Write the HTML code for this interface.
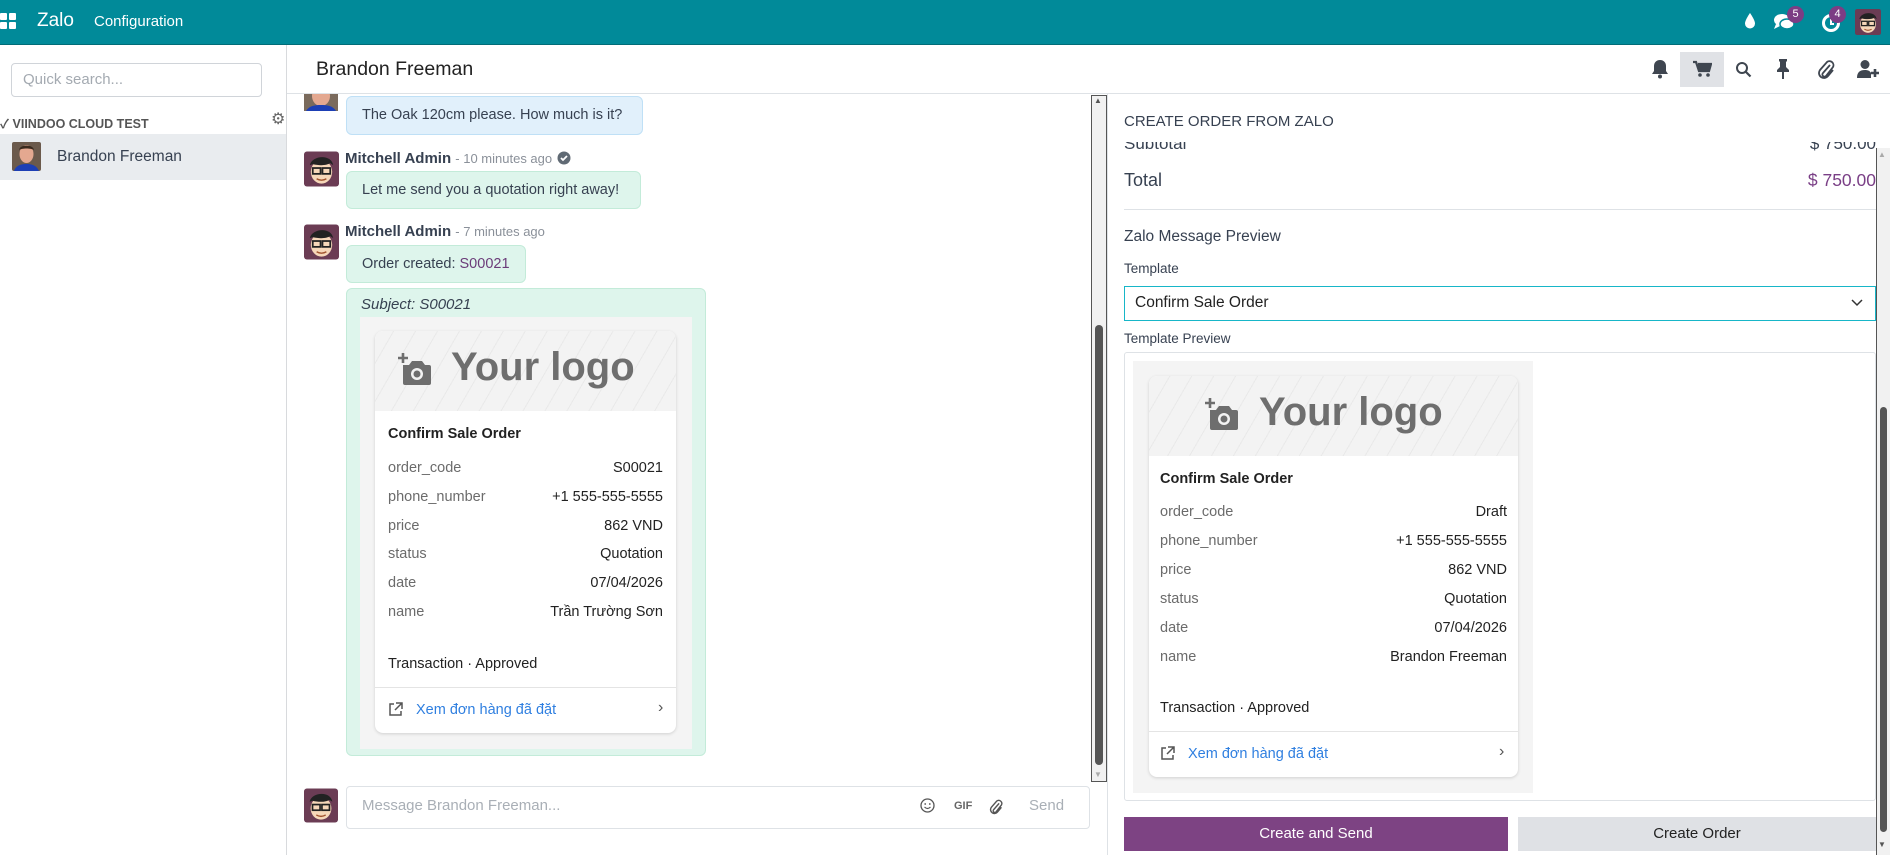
<!DOCTYPE html>
<html><head><meta charset="utf-8">
<style>
*{box-sizing:border-box;margin:0;padding:0}
body{width:1890px;height:855px;overflow:hidden;background:#fff;font-family:"Liberation Sans","Noto Sans CJK SC",sans-serif;color:#374151;position:relative}
.a{position:absolute}
.top{left:0;top:0;width:1890px;height:45px;background:#018a99;border-bottom:1px solid #016c77}
.t{white-space:nowrap}
.badge{position:absolute;width:17px;height:17px;border-radius:50%;background:#7c3d84;color:#fff;font-size:11px;text-align:center;line-height:17px}
.bub{position:absolute;border-radius:6px;font-size:14.5px;color:#374151;padding:0 15px;white-space:nowrap}
.blue{background:#e1f0fb;border:1px solid #bfe0f6}
.green{background:#def5ec;border:1px solid #c3ebd9}
.row{position:absolute;left:0;right:0;font-size:14.5px;display:flex;justify-content:space-between;padding:0 13px 0 13px}
.row span:first-child{color:#6b6b6b}
.row span:last-child{color:#222}
.card{position:absolute;background:#fff;border-radius:8px;box-shadow:0 1px 3px rgba(0,0,0,.15);overflow:hidden}
.logo{position:absolute;left:0;top:0;right:0;height:80px;background:repeating-linear-gradient(-60deg,#f3f3f3 0 18px,#e9e9e9 18px 19px)}
.logo .txt{position:absolute;font-weight:bold;font-size:40px;color:#6e6e6e;letter-spacing:0}
</style></head><body>

<div class="a top"></div>
<svg class="a" style="left:0;top:12px" width="20" height="20" viewBox="0 0 20 20"><rect x="0" y="1" width="7" height="7" rx="1" fill="#fff"/><rect x="9" y="1" width="7" height="7" rx="1" fill="#fff"/><rect x="0" y="10" width="7" height="7" rx="1" fill="#fff"/><rect x="9" y="10" width="7" height="7" rx="1" fill="#fff"/></svg>
<div class="a t" style="left:37px;top:10px;font-size:19px;color:#fff">Zalo</div>
<div class="a t" style="left:94px;top:13px;font-size:15px;color:#fff">Configuration</div>
<svg class="a" style="left:1744px;top:12px" width="12" height="18" viewBox="0 0 12 18"><path d="M6 1C6 1 1 8 1 11.5a5 5 0 0 0 10 0C11 8 6 1 6 1z" fill="#fff"/></svg>
<svg class="a" style="left:1773px;top:12px" width="22" height="20" viewBox="0 0 22 20"><ellipse cx="9" cy="8" rx="8" ry="6" fill="#fff"/><path d="M3 12l-2 5 6-3z" fill="#fff"/><ellipse cx="14" cy="12" rx="7" ry="5" fill="#fff" stroke="#018a99" stroke-width="1.5"/></svg>
<div class="badge" style="left:1787px;top:6px">5</div>
<svg class="a" style="left:1821px;top:13px" width="20" height="20" viewBox="0 0 20 20"><circle cx="10" cy="10" r="7.5" fill="none" stroke="#fff" stroke-width="3"/><path d="M10 6v5h3" stroke="#fff" stroke-width="2" fill="none"/></svg>
<div class="badge" style="left:1829px;top:6px">4</div>
<svg class="a" style="left:1855px;top:9px" width="26" height="26" viewBox="0 0 36 36"><rect width="36" height="36" rx="3" fill="#6b3c54"/><ellipse cx="18" cy="21" rx="11" ry="12" fill="#f6d7b9"/><path d="M6 14c2-10 22-12 24 0l-3-2c-3 2-10 3-18 1z" fill="#222"/><rect x="9" y="17" width="8" height="6" fill="none" stroke="#222" stroke-width="1.8"/><rect x="19" y="17" width="8" height="6" fill="none" stroke="#222" stroke-width="1.8"/><path d="M13 28q5 3 10 0" stroke="#a0522d" stroke-width="1.5" fill="none"/></svg>

<div class="a" style="left:286px;top:45px;width:1px;height:810px;background:#d8dadd"></div>
<div class="a" style="left:11px;top:63px;width:251px;height:34px;border:1px solid #d0d4d9;border-radius:4px"></div>
<div class="a t" style="left:23px;top:71px;font-size:15px;color:#a4aab1">Quick search...</div>
<div class="a t" style="left:0;top:113px;font-size:12.5px;font-weight:bold;color:#555">✓ VIINDOO CLOUD TEST</div>
<div class="a t" style="left:271px;top:109px;font-size:16px;color:#666">⚙</div>
<div class="a" style="left:0;top:134px;width:286px;height:46px;background:#e9ecef"></div>
<svg class="a" style="left:12px;top:142px" width="29" height="29" viewBox="0 0 29 29"><rect width="29" height="29" rx="2" fill="#6b5a4c"/><ellipse cx="14.5" cy="12" rx="7" ry="9" fill="#e4a890"/><path d="M7 8c1-6 14-6 15 0-3-2-12-2-15 0z" fill="#3a2a1e"/><path d="M2 29c2-6 8-7 12.5-7s10 1 12.5 7z" fill="#1d3fb5"/></svg>
<div class="a t" style="left:57px;top:148px;font-size:15.5px;color:#374151">Brandon Freeman</div>

<div class="a t" style="left:316px;top:58px;font-size:19.5px;color:#222">Brandon Freeman</div>
<div class="a" style="left:287px;top:93px;width:1603px;height:1px;background:#dee2e6"></div>
<div class="a" style="left:1680px;top:52px;width:44px;height:35px;background:#e0e2e6"></div>
<svg class="a" style="left:1651px;top:59px" width="18" height="20" viewBox="0 0 18 20"><path d="M9 1c-4 0-6 3-6 6v5l-2 3h16l-2-3V7c0-3-2-6-6-6z" fill="#3f4650"/><circle cx="9" cy="17.5" r="2" fill="#3f4650"/></svg>
<svg class="a" style="left:1692px;top:60px" width="20" height="18" viewBox="0 0 20 18"><path d="M1 2h3l3 9h10l2-7H6" fill="none" stroke="#3f4650" stroke-width="2.2"/><rect x="6" y="4" width="12" height="6" fill="#3f4650"/><circle cx="8" cy="15" r="1.8" fill="#3f4650"/><circle cx="16" cy="15" r="1.8" fill="#3f4650"/></svg>
<svg class="a" style="left:1735px;top:61px" width="17" height="17" viewBox="0 0 17 17"><circle cx="7" cy="7" r="5" fill="none" stroke="#3f4650" stroke-width="2"/><path d="M10.5 10.5l5 5" stroke="#3f4650" stroke-width="2.2"/></svg>
<svg class="a" style="left:1776px;top:58px" width="14" height="22" viewBox="0 0 14 22"><path d="M3 1h8v2l-1 1v5l3 3v2H1v-2l3-3V4L3 3z" fill="#3f4650"/><path d="M7 14v7" stroke="#3f4650" stroke-width="2"/></svg>
<svg class="a" style="left:1817px;top:59px" width="18" height="20" viewBox="0 0 18 20"><path d="M13 6l-7 8a2 2 0 0 0 3 3l7-9a4 4 0 0 0-6-5L3 11a5 5 0 0 0 8 6l5-6" fill="none" stroke="#3f4650" stroke-width="1.8"/></svg>
<svg class="a" style="left:1856px;top:59px" width="24" height="20" viewBox="0 0 24 20"><circle cx="9" cy="5.5" r="4.5" fill="#3f4650"/><path d="M1 19c0-6 3-8 8-8 3 0 5 1 6 3v5z" fill="#3f4650"/><path d="M19 10v8M15 14h8" stroke="#3f4650" stroke-width="2.6"/></svg>

<svg class="a" style="left:304px;top:94px" width="34" height="17" viewBox="0 0 34 17"><rect width="34" height="17" fill="#7a6a5c"/><ellipse cx="17" cy="2" rx="9" ry="10" fill="#e4a890"/><path d="M2 17c3-5 8-6 15-6s12 1 15 6z" fill="#1d3fb5"/></svg>
<div class="bub blue" style="left:346px;top:96px;width:297px;height:39px;line-height:37px">The Oak 120cm please. How much is it?</div>

<svg class="a" style="left:304px;top:151px" width="35" height="36" viewBox="0 0 36 36"><rect width="36" height="36" rx="3" fill="#6b3c54"/><ellipse cx="18" cy="21" rx="11" ry="12" fill="#f6d7b9"/><path d="M6 14c2-10 22-12 24 0l-3-2c-3 2-10 3-18 1z" fill="#222"/><rect x="9" y="17" width="8" height="6" fill="none" stroke="#222" stroke-width="1.8"/><rect x="19" y="17" width="8" height="6" fill="none" stroke="#222" stroke-width="1.8"/><path d="M13 28q5 3 10 0" stroke="#a0522d" stroke-width="1.5" fill="none"/></svg>
<div class="a t" style="left:345px;top:150px;font-size:15px;font-weight:bold;color:#374151">Mitchell Admin <span style="font-weight:normal;font-size:13px;color:#8a9099">- 10 minutes ago</span></div>
<svg class="a" style="left:557px;top:151px" width="14" height="14" viewBox="0 0 14 14"><circle cx="7" cy="7" r="6.5" fill="#606a74"/><path d="M4 7l2 2 4-4" stroke="#fff" stroke-width="1.8" fill="none"/></svg>
<div class="bub green" style="left:346px;top:171px;width:295px;height:38px;line-height:36px">Let me send you a quotation right away!</div>

<svg class="a" style="left:304px;top:224px" width="35" height="36" viewBox="0 0 36 36"><rect width="36" height="36" rx="3" fill="#6b3c54"/><ellipse cx="18" cy="21" rx="11" ry="12" fill="#f6d7b9"/><path d="M6 14c2-10 22-12 24 0l-3-2c-3 2-10 3-18 1z" fill="#222"/><rect x="9" y="17" width="8" height="6" fill="none" stroke="#222" stroke-width="1.8"/><rect x="19" y="17" width="8" height="6" fill="none" stroke="#222" stroke-width="1.8"/><path d="M13 28q5 3 10 0" stroke="#a0522d" stroke-width="1.5" fill="none"/></svg>
<div class="a t" style="left:345px;top:223px;font-size:15px;font-weight:bold;color:#374151">Mitchell Admin <span style="font-weight:normal;font-size:13px;color:#8a9099">- 7 minutes ago</span></div>
<div class="bub green" style="left:346px;top:245px;width:180px;height:38px;line-height:36px">Order created: <span style="color:#6b3c79">S00021</span></div>

<div class="a green" style="left:346px;top:288px;width:360px;height:468px;border-radius:6px"></div>
<div class="a t" style="left:361px;top:296px;font-size:15px;font-style:italic;color:#374151">Subject: S00021</div>
<div class="a" style="left:360px;top:317px;width:332px;height:432px;background:#f4f4f4"></div>
<div class="card" style="left:375px;top:331px;width:301px;height:402px">
  <div class="logo"><svg class="a" style="left:22px;top:22px" width="37" height="33" viewBox="0 0 37 33"><path d="M4 0v10M-1 5h10" stroke="#6e6e6e" stroke-width="2.6" transform="translate(2,0)"/><path d="M6 12h6l3-4h10l3 4h4a2 2 0 0 1 2 2v16a2 2 0 0 1-2 2H8a2 2 0 0 1-2-2z" fill="#6e6e6e"/><circle cx="20" cy="21" r="6" fill="#f3f3f3"/><circle cx="20" cy="21" r="3.5" fill="#6e6e6e"/></svg><div class="txt" style="left:76px;top:14px">Your logo</div></div>
  <div class="a t" style="left:13px;top:95px;font-size:14.5px;font-weight:bold;color:#222">Confirm Sale Order</div>
  <div class="row" style="top:129px"><span>order_code</span><span>S00021</span></div>
  <div class="row" style="top:158px"><span>phone_number</span><span>+1 555-555-5555</span></div>
  <div class="row" style="top:187px"><span>price</span><span>862 VND</span></div>
  <div class="row" style="top:215px"><span>status</span><span>Quotation</span></div>
  <div class="row" style="top:244px"><span>date</span><span>07/04/2026</span></div>
  <div class="row" style="top:273px"><span>name</span><span>Trần Trường Sơn</span></div>
  <div class="a t" style="left:13px;top:325px;font-size:14.5px;color:#222">Transaction · Approved</div>
  <div class="a" style="left:0;right:0;top:356px;height:1px;background:#e4e4e4"></div>
  <svg class="a" style="left:13px;top:371px" width="15" height="15" viewBox="0 0 15 15"><path d="M6 2H2v11h11V9" fill="none" stroke="#555" stroke-width="1.5"/><path d="M8 1h6v6M14 1L7 8" fill="none" stroke="#555" stroke-width="1.5"/></svg>
  <div class="a t" style="left:41px;top:371px;font-size:14.5px;color:#2f7fe0">Xem đơn hàng đã đặt</div>
  <div class="a t" style="left:283px;top:368px;font-size:16px;color:#555">›</div>
</div>

<div class="a" style="left:1091px;top:95px;width:16px;height:687px;background:#f1f1f1;border:1px solid #555"></div>
<div class="a" style="left:1095px;top:325px;width:8px;height:440px;background:#555;border-radius:4px"></div>
<div class="a t" style="left:1094px;top:96px;font-size:8px;color:#555">▲</div>
<div class="a t" style="left:1094px;top:770px;font-size:8px;color:#aaa">▼</div>
<div class="a" style="left:1107px;top:94px;width:1px;height:761px;background:#dee2e6"></div>

<svg class="a" style="left:304px;top:788px" width="34" height="35" viewBox="0 0 36 36"><rect width="36" height="36" rx="3" fill="#6b3c54"/><ellipse cx="18" cy="21" rx="11" ry="12" fill="#f6d7b9"/><path d="M6 14c2-10 22-12 24 0l-3-2c-3 2-10 3-18 1z" fill="#222"/><rect x="9" y="17" width="8" height="6" fill="none" stroke="#222" stroke-width="1.8"/><rect x="19" y="17" width="8" height="6" fill="none" stroke="#222" stroke-width="1.8"/><path d="M13 28q5 3 10 0" stroke="#a0522d" stroke-width="1.5" fill="none"/></svg>
<div class="a" style="left:346px;top:786px;width:744px;height:43px;border:1px solid #dee2e6;border-radius:4px"></div>
<div class="a t" style="left:362px;top:797px;font-size:15px;color:#a9afb6">Message Brandon Freeman...</div>
<svg class="a" style="left:920px;top:798px" width="15" height="15" viewBox="0 0 15 15"><circle cx="7.5" cy="7.5" r="6.5" fill="none" stroke="#555" stroke-width="1.3"/><circle cx="5.2" cy="6" r="0.9" fill="#555"/><circle cx="9.8" cy="6" r="0.9" fill="#555"/><path d="M4.5 9q3 3 6 0" fill="none" stroke="#555" stroke-width="1.2"/></svg>
<div class="a t" style="left:954px;top:800px;font-size:11px;font-weight:bold;color:#666">GIF</div>
<svg class="a" style="left:989px;top:798px" width="14" height="17" viewBox="0 0 18 20"><path d="M13 6l-7 8a2 2 0 0 0 3 3l7-9a4 4 0 0 0-6-5L3 11a5 5 0 0 0 8 6l5-6" fill="none" stroke="#555" stroke-width="1.8"/></svg>
<div class="a t" style="left:1029px;top:797px;font-size:15px;color:#a9afb6">Send</div>

<div class="a t" style="left:1124px;top:113px;font-size:15px;color:#374151">CREATE ORDER FROM ZALO</div>
<div class="a" style="left:1124px;top:142px;width:752px;height:15px;overflow:hidden">
  <div class="a t" style="left:0;top:-8px;font-size:17px;color:#374151">Subtotal</div>
  <div class="a t" style="right:0;top:-8px;font-size:17px;color:#374151">$ 750.00</div>
</div>
<div class="a t" style="left:1124px;top:170px;font-size:18px;color:#374151">Total</div>
<div class="a t" style="right:14px;top:170px;font-size:17.5px;color:#7a3f86">$ 750.00</div>
<div class="a" style="left:1124px;top:209px;width:752px;height:1px;background:#dee2e6"></div>
<div class="a t" style="left:1124px;top:228px;font-size:15.5px;color:#374151">Zalo Message Preview</div>
<div class="a t" style="left:1124px;top:261px;font-size:13.5px;color:#374151">Template</div>
<div class="a" style="left:1124px;top:286px;width:752px;height:35px;border:1.5px solid #17b6c8"></div>
<div class="a t" style="left:1135px;top:294px;font-size:15.5px;color:#222">Confirm Sale Order</div>
<svg class="a" style="left:1851px;top:299px" width="12" height="8" viewBox="0 0 12 8"><path d="M1 1l5 5 5-5" fill="none" stroke="#333" stroke-width="1.5"/></svg>
<div class="a t" style="left:1124px;top:331px;font-size:13.5px;color:#374151">Template Preview</div>
<div class="a" style="left:1124px;top:352px;width:752px;height:449px;border:1px solid #dee2e6;border-radius:3px"></div>
<div class="a" style="left:1133px;top:361px;width:400px;height:432px;background:#f4f4f4"></div>
<div class="card" style="left:1149px;top:376px;width:369px;height:401px">
  <div class="logo"><svg class="a" style="left:55px;top:22px" width="37" height="33" viewBox="0 0 37 33"><path d="M4 0v10M-1 5h10" stroke="#6e6e6e" stroke-width="2.6" transform="translate(2,0)"/><path d="M6 12h6l3-4h10l3 4h4a2 2 0 0 1 2 2v16a2 2 0 0 1-2 2H8a2 2 0 0 1-2-2z" fill="#6e6e6e"/><circle cx="20" cy="21" r="6" fill="#f3f3f3"/><circle cx="20" cy="21" r="3.5" fill="#6e6e6e"/></svg><div class="txt" style="left:110px;top:14px">Your logo</div></div>
  <div class="a t" style="left:11px;top:95px;font-size:14.5px;font-weight:bold;color:#222">Confirm Sale Order</div>
  <div class="row" style="top:128px;padding:0 11px"><span>order_code</span><span>Draft</span></div>
  <div class="row" style="top:157px;padding:0 11px"><span>phone_number</span><span>+1 555-555-5555</span></div>
  <div class="row" style="top:186px;padding:0 11px"><span>price</span><span>862 VND</span></div>
  <div class="row" style="top:215px;padding:0 11px"><span>status</span><span>Quotation</span></div>
  <div class="row" style="top:244px;padding:0 11px"><span>date</span><span>07/04/2026</span></div>
  <div class="row" style="top:273px;padding:0 11px"><span>name</span><span>Brandon Freeman</span></div>
  <div class="a t" style="left:11px;top:324px;font-size:14.5px;color:#222">Transaction · Approved</div>
  <div class="a" style="left:0;right:0;top:355px;height:1px;background:#e4e4e4"></div>
  <svg class="a" style="left:11px;top:370px" width="15" height="15" viewBox="0 0 15 15"><path d="M6 2H2v11h11V9" fill="none" stroke="#555" stroke-width="1.5"/><path d="M8 1h6v6M14 1L7 8" fill="none" stroke="#555" stroke-width="1.5"/></svg>
  <div class="a t" style="left:39px;top:370px;font-size:14.5px;color:#2f7fe0">Xem đơn hàng đã đặt</div>
  <div class="a t" style="left:350px;top:367px;font-size:16px;color:#555">›</div>
</div>
<div class="a" style="left:1124px;top:817px;width:384px;height:34px;background:#7d4383;color:#fff;font-size:15px;text-align:center;line-height:34px">Create and Send</div>
<div class="a" style="left:1518px;top:817px;width:358px;height:34px;background:#dfe1e5;color:#222;font-size:15px;text-align:center;line-height:34px">Create Order</div>

<div class="a" style="left:1876px;top:148px;width:14px;height:707px;background:#f1f1f1;border-left:1px solid #555"></div>
<div class="a" style="left:1880px;top:407px;width:7px;height:425px;background:#555;border-radius:4px"></div>
<div class="a t" style="left:1878px;top:150px;font-size:8px;color:#aaa">▲</div>
<div class="a t" style="left:1878px;top:840px;font-size:8px;color:#555">▼</div>
</body></html>
